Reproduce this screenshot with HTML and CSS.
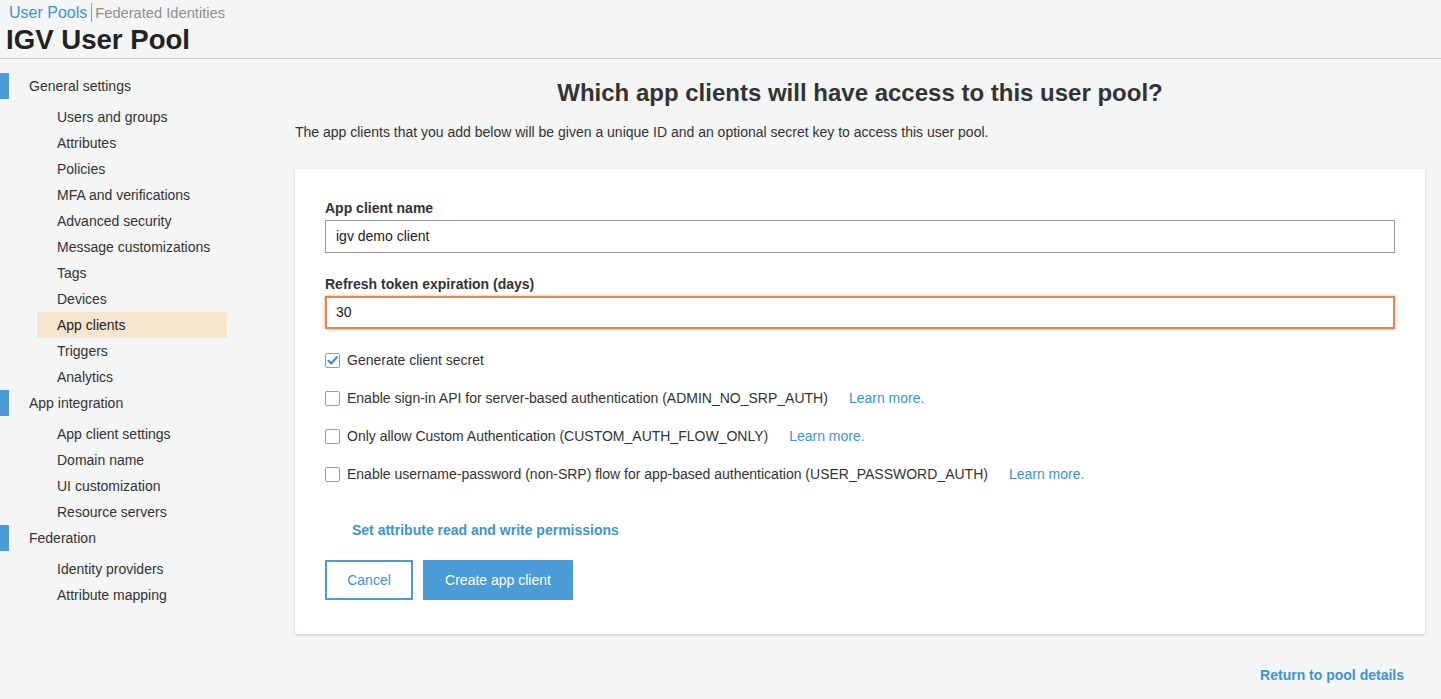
FILE: index.html
```html
<!DOCTYPE html>
<html>
<head>
<meta charset="utf-8">
<link rel="stylesheet" href="styles.css">
</head>
<body>
<header class="top">
  <div class="crumbs"><a class="crumb-active">User Pools</a><span class="crumb-sep"></span><a class="crumb">Federated Identities</a></div>
  <h1 class="pool-title">IGV User Pool</h1>
</header>
<div class="layout">
  <nav class="sidebar">
    <div class="nav-section">General settings</div>
    <ul class="nav-list">
      <li class="nav-item">Users and groups</li>
      <li class="nav-item">Attributes</li>
      <li class="nav-item">Policies</li>
      <li class="nav-item">MFA and verifications</li>
      <li class="nav-item">Advanced security</li>
      <li class="nav-item">Message customizations</li>
      <li class="nav-item">Tags</li>
      <li class="nav-item">Devices</li>
      <li class="nav-item active">App clients</li>
      <li class="nav-item">Triggers</li>
      <li class="nav-item">Analytics</li>
    </ul>
    <div class="nav-section">App integration</div>
    <ul class="nav-list">
      <li class="nav-item">App client settings</li>
      <li class="nav-item">Domain name</li>
      <li class="nav-item">UI customization</li>
      <li class="nav-item">Resource servers</li>
    </ul>
    <div class="nav-section">Federation</div>
    <ul class="nav-list">
      <li class="nav-item">Identity providers</li>
      <li class="nav-item">Attribute mapping</li>
    </ul>
  </nav>
  <main class="main">
    <h2 class="heading">Which app clients will have access to this user pool?</h2>
    <p class="desc">The app clients that you add below will be given a unique ID and an optional secret key to access this user pool.</p>
    <section class="card">
      <label class="field-label">App client name</label>
      <div class="input">igv demo client</div>
      <label class="field-label second">Refresh token expiration (days)</label>
      <div class="input focused">30</div>
      <div class="checks">
        <div class="check-row">
          <span class="box checked"><svg width="13" height="13" viewBox="0 0 13 13"><path d="M2.5 6.8 L5.2 9.4 L10.8 3.2" fill="none" stroke="#3d8fd0" stroke-width="2.2" stroke-linecap="round" stroke-linejoin="round"/></svg></span>
          <span class="check-text">Generate client secret</span>
        </div>
        <div class="check-row">
          <span class="box"></span>
          <span class="check-text">Enable sign-in API for server-based authentication (ADMIN_NO_SRP_AUTH)</span>
          <a class="learn">Learn more.</a>
        </div>
        <div class="check-row">
          <span class="box"></span>
          <span class="check-text">Only allow Custom Authentication (CUSTOM_AUTH_FLOW_ONLY)</span>
          <a class="learn">Learn more.</a>
        </div>
        <div class="check-row">
          <span class="box"></span>
          <span class="check-text">Enable username-password (non-SRP) flow for app-based authentication (USER_PASSWORD_AUTH)</span>
          <a class="learn">Learn more.</a>
        </div>
      </div>
      <a class="attr-link">Set attribute read and write permissions</a>
      <div class="buttons">
        <button class="btn btn-cancel">Cancel</button>
        <button class="btn btn-primary">Create app client</button>
      </div>
    </section>
    <div class="footer-link"><a class="return">Return to pool details</a></div>
  </main>
</div>
</body>
</html>
```
FILE: styles.css
```css
* { box-sizing: border-box; }
html, body { margin: 0; padding: 0; }
body {
  background: #f4f5f5;
  font-family: "Liberation Sans", Arial, sans-serif;
  color: #333;
  font-size: 14px;
  width: 1441px;
  height: 699px;
  overflow: hidden;
}
.top {
  border-bottom: 1px solid #c9cbcc;
  padding: 3px 0 0 0;
  height: 59px;
}
.crumbs {
  padding-left: 9px;
  font-size: 16px;
  line-height: 18px;
  display: flex;
  align-items: center;
}
.crumb-active { color: #3d94d3; }
.crumb-sep { display: inline-block; width: 1px; height: 19px; background: #999; margin: 0 3px 0 4px; }
.crumb { color: #909090; font-size: 14.7px; }
.pool-title {
  margin: 3px 0 0 6px;
  font-size: 27.6px;
  line-height: 30px;
  font-weight: bold;
  color: #222;
}
.layout { display: flex; }
.sidebar { width: 295px; flex: none; padding-top: 14px; }
.nav-section {
  height: 26px;
  line-height: 26px;
  border-left: 9px solid #4a9bd6;
  padding-left: 20px;
  margin-bottom: 5px;
  color: #333;
}
.nav-list { list-style: none; margin: 0; padding: 0; }
.nav-item {
  height: 26px;
  line-height: 26px;
  margin-left: 37px;
  width: 190px;
  padding-left: 20px;
  color: #333;
}
.nav-item.active { background: #f8e5cd; color: #222; }
.main { flex: 1; padding-right: 16px; }
.heading {
  text-align: center;
  font-size: 24px;
  line-height: 28px;
  margin: 20px 0 0 0;
  font-weight: bold;
  color: #333;
}
.desc { margin: 16px 0 0 0; line-height: 18px; color: #333; }
.card {
  margin-top: 28px;
  background: #fff;
  box-shadow: 0 1px 3px rgba(0,0,0,0.18);
  padding: 30px 30px 34px 30px;
  height: 465px;
}
.field-label {
  display: block;
  font-weight: bold;
  line-height: 18px;
  margin-bottom: 3px;
  color: #333;
}
.field-label.second { margin-top: 22px; }
.input {
  height: 33px;
  border: 1px solid #969c9e;
  padding-left: 10px;
  line-height: 31px;
  color: #222;
}
.input.focused {
  border: 2px solid #e0884f;
  box-shadow: 0 0 3px rgba(224,136,79,0.7);
  line-height: 29px;
  padding-left: 9px;
}
.checks { margin-top: 12px; }
.check-row {
  display: flex;
  align-items: center;
  height: 38px;
}
.box {
  width: 15px;
  height: 15px;
  border: 1px solid #9a9ea0;
  border-radius: 2px;
  margin-right: 7px;
  display: flex;
  align-items: center;
  justify-content: center;
  background: #fff;
}
.check-text { color: #333; }
.learn { color: #3d94d3; margin-left: 21px; }
.attr-link {
  display: block;
  margin: 27px 0 0 27px;
  line-height: 20px;
  font-weight: bold;
  color: #3d94d3;
}
.buttons { display: flex; gap: 10px; margin-top: 20px; }
.btn {
  height: 40px;
  font-family: "Liberation Sans", Arial, sans-serif;
  font-size: 14px;
  border-radius: 0;
  cursor: pointer;
}
.btn-cancel {
  width: 88px;
  background: #fff;
  border: 2px solid #4a9bd6;
  color: #3d94d3;
}
.btn-primary {
  width: 150px;
  background: #4a9bd6;
  border: none;
  color: #fff;
}
.footer-link { text-align: right; padding-right: 21px; margin-top: 32px; }
.return { font-weight: bold; color: #3d94d3; line-height: 18px; }
```
